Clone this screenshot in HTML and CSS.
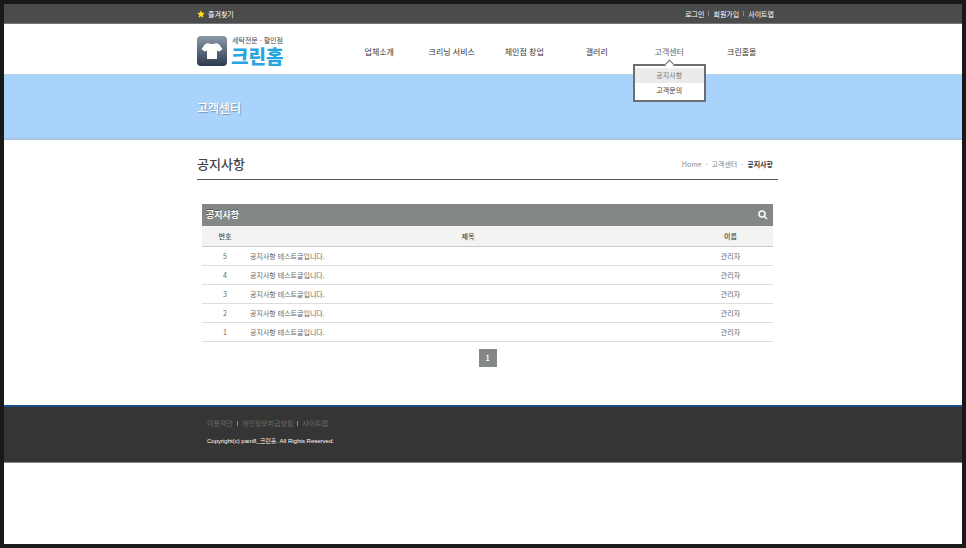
FILE: index.html
```
<!DOCTYPE html>
<html lang="ko">
<head>
    <meta charset="UTF-8">
    <meta name="viewport" content="width=device-width, initial-scale=1.0">
    <title>크린홈 - 공지사항</title>
    <link rel="stylesheet" href="styles.css">
</head>
<body>
    <div class="topbar">
        <div class="container topbar-inner">
            <a class="favorite" href="#">
                <svg class="star" viewBox="0 0 16 16"><path d="M8 0.5l2.2 5.2 5.5.5-4.200 3.700 1.300 5.500L8 12.500l-4.800 2.900 1.300-5.500L.3 6.200l5.500-.5z"/></svg>
                즐겨찾기
            </a>
            <ul class="links">
                <li><a href="#">로그인</a></li>
                <li><a href="#">회원가입</a></li>
                <li><a href="#">사이트맵</a></li>
            </ul>
        </div>
    </div>

    <header class="container header">
        <a class="logo" href="#">
            <svg class="logo-icon" viewBox="0 0 30 30">
                <defs>
                    <linearGradient id="logo-bg" x1="0" y1="0" x2="0" y2="1">
                        <stop offset="0" stop-color="#8b9aa7"/>
                        <stop offset="1" stop-color="#2c394f"/>
                    </linearGradient>
                </defs>
                <rect width="30" height="30" rx="4" fill="url(#logo-bg)"/>
                <path d="M11 7c1.500 1.300 6.500 1.300 8 0l3 1.200 3.500 4.800-3 2.500-2.500-1v8.500h-10v-8.500l-2.500 1-3-2.500 3.500-4.800z" fill="#fff"/>
            </svg>
            <span class="logo-text">
                <span class="logo-sub">세탁전문 · 할인점</span>
                <strong class="logo-name">크린홈</strong>
            </span>
        </a>
        <nav>
            <ul class="menu">
                <li><a href="#">업체소개</a></li>
                <li><a href="#">크리닝 서비스</a></li>
                <li><a href="#">체인점 창업</a></li>
                <li><a href="#">갤러리</a></li>
                <li class="active">
                    <a href="#">고객센터</a>
                    <ul class="submenu">
                        <li><a class="current" href="#">공지사항</a></li>
                        <li><a href="#">고객문의</a></li>
                    </ul>
                </li>
                <li><a href="#">크린홈몰</a></li>
            </ul>
        </nav>
    </header>

    <div class="visual">
        <div class="container">
            <p class="visual-title">고객센터</p>
        </div>
    </div>

    <main class="container">
        <div class="page-head">
            <h1>공지사항</h1>
            <div class="breadcrumb">
                <a href="#">Home</a>
                <span>·</span>
                <a href="#">고객센터</a>
                <span>·</span>
                <strong>공지사항</strong>
            </div>
        </div>

        <section class="board">
            <div class="board-bar">
                <h2>공지사항</h2>
                <button class="search" type="button" aria-label="검색">
                    <svg viewBox="0 0 10 10"><circle cx="4" cy="4" r="3"/><path d="M6.500 6.500L9 9"/></svg>
                </button>
            </div>
            <table>
                <thead>
                    <tr><th class="num">번호</th><th>제목</th><th class="name">이름</th></tr>
                </thead>
                <tbody>
                    <tr><td>5</td><td class="subject"><a href="#">공지사항 테스트글입니다.</a></td><td>관리자</td></tr>
                    <tr><td>4</td><td class="subject"><a href="#">공지사항 테스트글입니다.</a></td><td>관리자</td></tr>
                    <tr><td>3</td><td class="subject"><a href="#">공지사항 테스트글입니다.</a></td><td>관리자</td></tr>
                    <tr><td>2</td><td class="subject"><a href="#">공지사항 테스트글입니다.</a></td><td>관리자</td></tr>
                    <tr><td>1</td><td class="subject"><a href="#">공지사항 테스트글입니다.</a></td><td>관리자</td></tr>
                </tbody>
            </table>
            <div class="paging"><a href="#">1</a></div>
        </section>
    </main>

    <footer>
        <div class="container footer-inner">
            <ul class="links footer-links">
                <li><a href="#">이용약관</a></li>
                <li><a href="#">개인정보취급방침</a></li>
                <li><a href="#">사이트맵</a></li>
            </ul>
            <p class="copyright">Copyright(c) pam8_크린홈. All Rights Reserved.</p>
        </div>
    </footer>
</body>
</html>
```

FILE: styles.css
```
* {
    box-sizing: border-box;
}
body {
    margin: 0;
    min-height: 100vh;
    border: 4px solid #191919;
    background-color: #fff;
    color: #666;
    font-family: "Noto Sans CJK KR", sans-serif;
    font-size: 7px;
    line-height: 12px;
}
h1, h2, p, ul {
    margin: 0;
    padding: 0;
}
ul {
    list-style: none;
}
a {
    color: inherit;
    text-decoration: none;
}
.container {
    max-width: 590px;
    margin: 0 auto;
    padding-left: 9px;
}

/* top bar */
.topbar {
    background-color: #4b4b4b;
    border-bottom: 1px solid #777;
    color: #fff;
}
.topbar-inner {
    display: flex;
    justify-content: space-between;
    align-items: center;
    height: 19px;
    padding-right: 4px;
}
.favorite {
    display: flex;
    align-items: center;
    gap: 3px;
}
.star {
    width: 8px;
    height: 8px;
    fill: #ffde1c;
}
.links {
    display: flex;
}
.links li {
    display: flex;
    align-items: center;
}
.links li + li::before {
    content: "";
    height: 5px;
    margin: 0 4px;
    border-left: 1px solid #888;
}

/* header */
.header {
    display: flex;
    justify-content: space-between;
    height: 50px;
}
.logo {
    display: flex;
    gap: 4px;
    padding-top: 12px;
}
.logo-icon {
    width: 30px;
    height: 30px;
}
.logo-text {
    display: flex;
    flex-direction: column;
}
.logo-sub {
    padding-left: 1px;
    color: #444;
    line-height: 8px;
}
.logo-name {
    color: #27a5e0;
    font-size: 19px;
    font-weight: 900;
    line-height: 24px;
}
.menu {
    display: grid;
    grid-template-columns: repeat(6, 1fr);
    width: 435px;
    padding-top: 22px;
    color: #333;
    font-size: 8px;
    text-align: center;
}
.menu .active {
    position: relative;
    color: #666;
}
.submenu {
    position: absolute;
    top: 18px;
    left: 0;
    right: 0;
    padding: 2px 0;
    border: 2px solid #6c6f72;
    background-color: #fff;
    color: #444;
    font-size: 7px;
    line-height: 15px;
}
.submenu::before {
    content: "";
    position: absolute;
    top: -5px;
    left: 50%;
    width: 6px;
    height: 6px;
    margin-left: -3px;
    border: solid #6c6f72;
    border-width: 1px 0 0 1px;
    background-color: #fff;
    transform: rotate(45deg);
}
.submenu a {
    display: block;
}
.submenu .current {
    background-color: #ebebeb;
    color: #777;
}

.visual {
    padding: 24px 0 21px;
    border-top: 1px solid #b5d1ea;
    border-bottom: 2px solid #a8c6e2;
    background-color: #a9d3fa;
}
.visual-title {
    color: #fff;
    font-size: 12px;
    font-weight: 500;
    line-height: 18px;
    text-shadow: 1px 1px 1px #7d97b0;
}

/* content */
.page-head {
    display: flex;
    justify-content: space-between;
    align-items: center;
    height: 40px;
    padding: 8px 5px 0 0;
    border-bottom: 1px solid #555957;
}
.page-head h1 {
    color: #444;
    font-size: 13px;
    font-weight: 500;
    line-height: 20px;
}
.breadcrumb {
    display: flex;
    gap: 4px;
    color: #888;
}
.breadcrumb strong {
    color: #333;
}
.board {
    padding: 24px 5px 38px;
}
.board-bar {
    display: flex;
    justify-content: space-between;
    align-items: center;
    height: 22px;
    padding: 0 5px 0 4px;
    background-color: #838786;
}
.board-bar h2 {
    color: #fff;
    font-size: 9px;
    font-weight: 700;
    text-shadow: 0 -1px 0 #555;
}
.search {
    display: flex;
    padding: 0;
    border: none;
    background: none;
    cursor: pointer;
}
.search svg {
    width: 10px;
    height: 10px;
    fill: none;
    stroke: #fff;
    stroke-width: 1.5;
}
table {
    width: 100%;
    border-collapse: separate;
    border-spacing: 0;
    table-layout: fixed;
}
th {
    height: 21px;
    padding: 0;
    border-bottom: 1px solid #ccc;
    background-color: #f3f3f2;
    color: #444;
    font-weight: 500;
}
.num {
    width: 46px;
}
.name {
    width: 85px;
}
td {
    height: 19px;
    padding: 0;
    border-bottom: 1px solid #ddd;
    text-align: center;
}
td.subject {
    padding-left: 2px;
    text-align: left;
}
.paging {
    display: flex;
    justify-content: center;
    padding-top: 7px;
}
.paging a {
    width: 18px;
    background-color: #838786;
    color: #fff;
    font-weight: 700;
    line-height: 18px;
    text-align: center;
}

/* footer */
footer {
    border-top: 2px solid #1b4f86;
    border-bottom: 1px solid #888;
    background-color: #353535;
}
.footer-inner {
    padding: 10px 0 15px 19px;
}
.footer-links {
    color: #6b6b6b;
}
.copyright {
    padding-top: 6px;
    color: #fff;
    font-family: "Liberation Sans", "Noto Sans CJK KR", sans-serif;
    font-size: 6px;
}
```
